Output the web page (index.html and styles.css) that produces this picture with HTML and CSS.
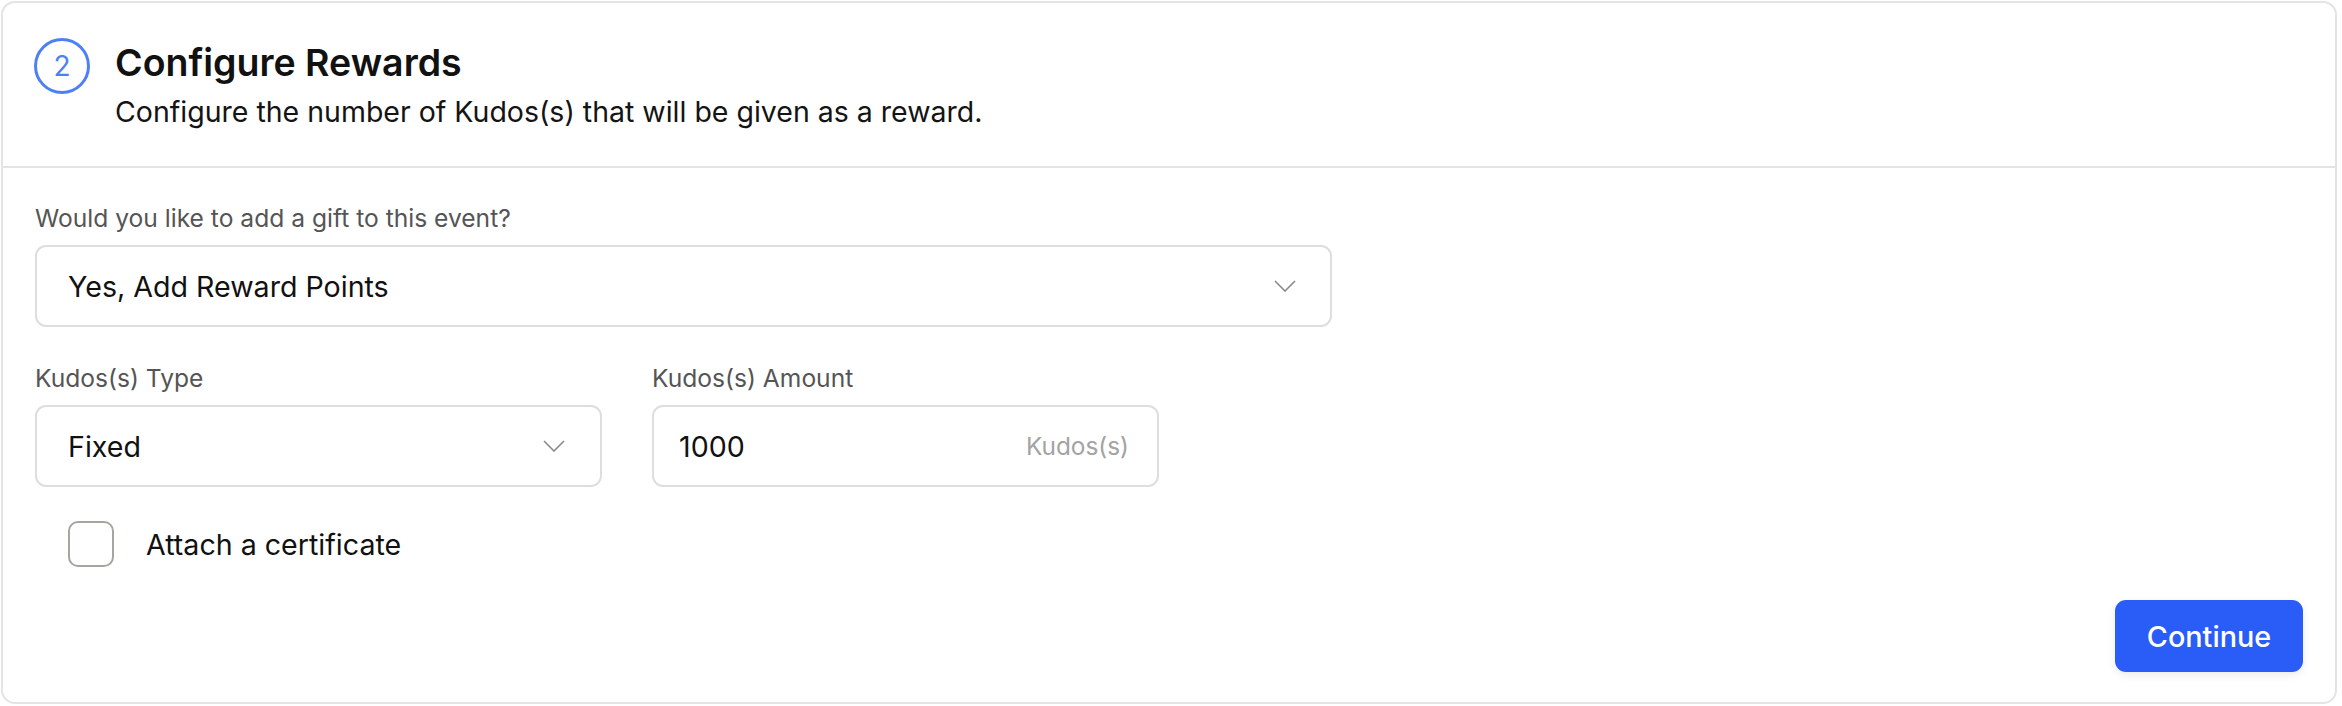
FILE: index.html
```html
<!DOCTYPE html>
<html lang="en">
<head>
<meta charset="utf-8">
<title>Configure Rewards</title>
<link rel="stylesheet" href="styles.css">
</head>
<body>
<section class="card">
  <header class="card-head">
    <div class="step">2</div>
    <div class="head-text">
      <h2 class="title">Configure Rewards</h2>
      <p class="subtitle">Configure the number of Kudos(s) that will be given as a reward.</p>
    </div>
  </header>
  <div class="card-body">
    <div class="field">
      <label class="label">Would you like to add a gift to this event?</label>
      <div class="control select wide">
        <span class="value">Yes, Add Reward Points</span>
        <svg class="chev" width="22" height="12" viewBox="0 0 22 12"><polyline points="1,1 11,11 21,1" fill="none" stroke="#8a8a8a" stroke-width="1.6"/></svg>
      </div>
    </div>
    <div class="row">
      <div class="field">
        <label class="label">Kudos(s) Type</label>
        <div class="control select type">
          <span class="value">Fixed</span>
          <svg class="chev" width="22" height="12" viewBox="0 0 22 12"><polyline points="1,1 11,11 21,1" fill="none" stroke="#8a8a8a" stroke-width="1.6"/></svg>
        </div>
      </div>
      <div class="field">
        <label class="label">Kudos(s) Amount</label>
        <div class="control amount">
          <span class="value">1000</span>
          <span class="suffix">Kudos(s)</span>
        </div>
      </div>
    </div>
    <label class="check">
      <span class="box"></span>
      <span class="check-text">Attach a certificate</span>
    </label>
    <div class="actions">
      <button class="btn">Continue</button>
    </div>
  </div>
</section>
</body>
</html>
```

FILE: styles.css
```css
* { box-sizing: border-box; }
html, body { margin: 0; background: #ffffff; }
body {
  padding: 1px 5px 2px 1px;
  font-family: "Inter", "Liberation Sans", sans-serif;
  color: #111111;
}
.card {
  width: 2336px;
  height: 703px;
  border: 2px solid #e4e4e4;
  border-radius: 14px;
  background: #fff;
  display: flex;
  flex-direction: column;
}
.card-head {
  display: flex;
  align-items: flex-start;
  gap: 25px;
  padding: 35px 32px 0 31px;
  height: 165px;
  border-bottom: 2px solid #e4e4e4;
}
.step {
  width: 56px;
  height: 56px;
  flex: none;
  border: 3px solid #4d80f6;
  border-radius: 50%;
  color: #4d80f6;
  font-size: 28px;
  display: flex;
  align-items: center;
  justify-content: center;
}
.title {
  margin: 3px 0 0;
  font-size: 37.5px;
  font-weight: 600;
  line-height: 44px;
  color: #111;
}
.subtitle {
  margin: 10px 0 0;
  font-size: 28.5px;
  line-height: 34px;
  color: #141414;
}
.card-body {
  flex: 1;
  padding: 35px 32px 30px 32px;
  display: flex;
  flex-direction: column;
}
.label {
  display: block;
  font-size: 24.6px;
  line-height: 30px;
  color: #555;
  margin-bottom: 12px;
}
.control {
  height: 82px;
  border: 2px solid #dedede;
  border-radius: 11px;
  display: flex;
  align-items: center;
  padding: 0 34px 0 31px;
  font-size: 28.6px;
  color: #111;
}
.select { justify-content: space-between; }
.wide { width: 1297px; }
.row {
  display: flex;
  gap: 50px;
  margin-top: 36px;
}
.type { width: 567px; padding-right: 35px; }
.amount { width: 507px; justify-content: space-between; padding: 0 28px 0 25px; }
.suffix { color: #a3a3a3; font-size: 24.4px; }
.check {
  display: flex;
  align-items: center;
  gap: 32px;
  margin-top: 34px;
  margin-left: 33px;
}
.box {
  width: 46px;
  height: 46px;
  flex: none;
  border: 2px solid #a8a4a0;
  border-radius: 10px;
}
.check-text { font-size: 28.6px; color: #111; }
.actions {
  margin-top: auto;
  display: flex;
  justify-content: flex-end;
}
.btn {
  width: 188px;
  height: 72px;
  border: none;
  border-radius: 11px;
  background: #2a5cf7;
  color: #fff;
  font-family: inherit;
  font-size: 28.8px;
  font-weight: 500;
  box-shadow: 0 3px 8px rgba(0,0,0,0.08);
}
```
